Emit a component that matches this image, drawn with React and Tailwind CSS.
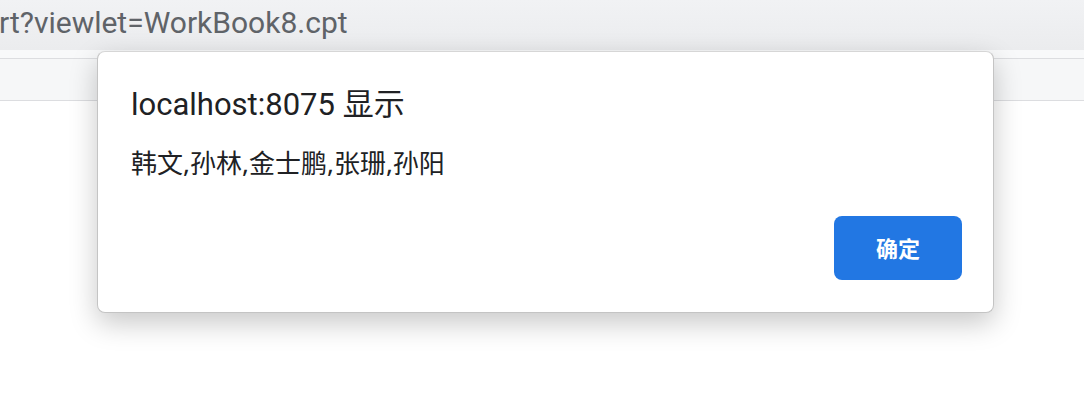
import React from "react";

const font = { fontFamily: '"Noto Sans", "Noto Sans CJK SC", sans-serif' };

export default function App() {
  return (
    <div className="relative w-[1084px] h-[400px] overflow-hidden bg-white" style={font}>
      {/* browser chrome */}
      <div className="h-[50px] bg-gradient-to-b from-[#f1f2f4] to-[#ebecee] flex items-center overflow-hidden">
        <span className="ml-[-1px] mt-[-4px] text-[30px] text-[#5f6368] leading-none whitespace-nowrap font-['Roboto',sans-serif]">
          rt?viewlet=WorkBook8.cpt
        </span>
      </div>
      <div className="h-[8px] bg-[#f8f9fa]" />
      <div className="h-[43px] bg-[#f6f7f8] border-t border-b border-[#dcdde0]" />

      {/* alert dialog */}
      <div className="absolute left-[97px] top-[51px] w-[897px] h-[262px] bg-white rounded-[8px] border border-[#c4c4c4] border-t-[#d6d6d6] shadow-[0_10px_28px_rgba(0,0,0,0.22)] flex flex-col pl-[33px] pr-[31px]">
        <div className="mt-[35px] text-[31px] leading-[36px] text-[#202124] font-['Roboto','Noto_Sans_CJK_SC',sans-serif]">
          localhost:8075 显示
        </div>
        <div className="mt-[24px] text-[26px] leading-[32px] text-[#202124]">
          韩文,孙林,金士鹏,张珊,孙阳
        </div>
        <div className="mt-auto mb-[32px] flex justify-end">
          <button className="w-[128px] h-[64px] rounded-[8px] bg-[#2277e3] text-white text-[22px] font-bold">
            确定
          </button>
        </div>
      </div>
    </div>
  );
}
